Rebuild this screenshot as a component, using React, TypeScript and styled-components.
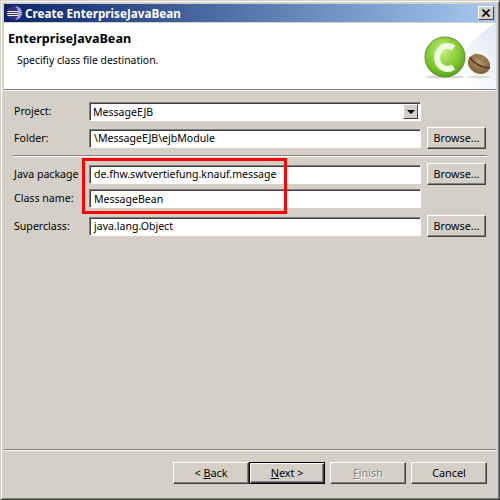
import React from "react";
import styled, { createGlobalStyle } from "styled-components";

const Global = createGlobalStyle`
  html, body { margin: 0; padding: 0; background: #d4d0c8; }
  * { box-sizing: border-box; }
`;

const Win = styled.div`
  position: relative;
  width: 500px;
  height: 500px;
  background: #d4d0c8;
  font-family: "Noto Sans", sans-serif;
  font-size: 10.55px;
  color: #000;
  border-style: solid;
  border-width: 1px;
  border-color: #d4d0c8 #404040 #404040 #d4d0c8;
  box-shadow: inset 1px 1px 0 #fff, inset -1px -1px 0 #808080;
  padding: 3px 3px 3px 3px;
  display: flex;
  flex-direction: column;
`;

const TitleBar = styled.div`
  height: 18px;
  flex: none;
  background: linear-gradient(90deg, #0a246a, #a6caf0);
  color: #fff;
  font-weight: 700;
  font-size: 11.7px;
  display: flex;
  align-items: center;
  padding: 0 2px;
  gap: 3px;
`;

const TitleText = styled.span`
  flex: 1;
  white-space: nowrap;
  padding-bottom: 1px;
`;

const CloseBtn = styled.div`
  width: 16px;
  height: 14px;
  background: #d4d0c8;
  border: 1px solid;
  border-color: #fff #404040 #404040 #fff;
  display: flex;
  align-items: center;
  justify-content: center;
`;

const Header = styled.div`
  margin-top: 1px;
  height: 67px;
  flex: none;
  background: #fff;
  border-bottom: 1px solid #808080;
  box-shadow: 0 1px 0 #fff;
  display: flex;
  justify-content: space-between;
  position: relative;
`;

const HeaderText = styled.div`
  padding: 8px 0 0 4px;
`;

const HeaderTitle = styled.div`
  font-weight: 700;
  font-size: 12.6px;
  line-height: 16px;
`;

const HeaderSub = styled.div`
  margin: 6px 0 0 9px;
  line-height: 14px;
  font-size: 10.4px;
`;

const Form = styled.div`
  padding: 12px 9px 0 9px;
  display: flex;
  flex-direction: column;
  flex: 1;
`;

const Row = styled.div<{ $mb?: number }>`
  display: grid;
  grid-template-columns: 70px 332px 59px;
  column-gap: 6px;
  align-items: center;
  height: 19px;
  margin-bottom: ${(p) => p.$mb ?? 7}px;
`;

const Label = styled.label`
  white-space: nowrap;
  padding: 0 0 1px 1px;
  font-size: 10.6px;
`;

const Field = styled.div`
  height: 19px;
  background: #fff;
  border: 1px solid;
  border-color: #808080 #fff #fff #808080;
  box-shadow: inset 1px 1px 0 #404040;
  padding: 0 0 0 4px;
  display: flex;
  align-items: center;
  line-height: 16px;
  white-space: nowrap;
  overflow: hidden;
  position: relative;
`;

const Combo = styled(Field)`
  padding-left: 3px;
  padding-right: 2px;
  justify-content: space-between;
`;

const ComboBtn = styled.div`
  width: 15px;
  height: 15px;
  background: #d4d0c8;
  border: 1px solid;
  border-color: #fff #404040 #404040 #fff;
  display: flex;
  align-items: center;
  justify-content: center;
`;

const Arrow = styled.div`
  width: 0;
  height: 0;
  border-left: 4px solid transparent;
  border-right: 4px solid transparent;
  border-top: 4px solid #000;
`;

const Btn = styled.div<{ $def?: boolean; $dis?: boolean; $w?: number }>`
  height: 22px;
  width: ${(p) => p.$w ?? 59}px;
  background: #d4d0c8;
  display: flex;
  align-items: center;
  justify-content: center;
  white-space: nowrap;
  padding-bottom: 2px;
  font-size: 10.8px;
  border: 1px solid;
  border-color: ${(p) => (p.$def ? "#000" : "#fff #404040 #404040 #fff")};
  box-shadow: ${(p) => (p.$def ? "inset 1px 1px 0 #fff, inset -1px -1px 0 #404040, inset -2px -2px 0 #808080" : "inset -1px -1px 0 #808080")};
  color: ${(p) => (p.$dis ? "#808080" : "#000")};
  text-shadow: ${(p) => (p.$dis ? "1px 1px 0 #fff" : "none")};
`;

const Rule = styled.div<{ $mt: number; $mb: number }>`
  height: 2px;
  flex: none;
  border-top: 1px solid #808080;
  border-bottom: 1px solid #fff;
  margin: ${(p) => p.$mt}px 0 ${(p) => p.$mb}px;
`;

const Spacer = styled.div`
  flex: 1;
`;

const Footer = styled.div`
  display: flex;
  justify-content: flex-end;
  padding: 11px 9px 12px 0;
  gap: 5px;
`;

const Joined = styled.div`
  display: flex;
`;

const Highlight = styled.div`
  position: absolute;
  left: 81px;
  top: 157px;
  width: 205px;
  height: 56px;
  border: 3px solid #fe0000;
  pointer-events: none;
`;

const Key = styled.span`
  text-decoration: underline;
`;

const Logo = () => (
  <svg width="82" height="66" viewBox="0 0 82 66" style={{ flex: "none" }}>
    <defs>
      <linearGradient id="bg" x1="0" y1="1" x2="1" y2="0">
        <stop offset="0.2" stopColor="#fff" />
        <stop offset="1" stopColor="#dfe6f5" />
      </linearGradient>
      <radialGradient id="g" cx="0.45" cy="0.35" r="0.7">
        <stop offset="0" stopColor="#c8ee80" />
        <stop offset="0.6" stopColor="#7fca2c" />
        <stop offset="1" stopColor="#4f9c18" />
      </radialGradient>
      <radialGradient id="b" cx="0.45" cy="0.4" r="0.7">
        <stop offset="0" stopColor="#b39a72" />
        <stop offset="1" stopColor="#6a4f2c" />
      </radialGradient>
    </defs>
    <path d="M82 0 V66 H34 Q46 20 82 0Z" fill="url(#bg)" />
    <ellipse cx="31" cy="54" rx="20" ry="1.5" fill="#d8d4cc" />
    <ellipse cx="65" cy="54" rx="12" ry="1.2" fill="#dedad2" />
    <circle cx="31" cy="34" r="20" fill="url(#g)" stroke="#5d8f3a" strokeWidth="1" />
    <path d="M39.5 25 A 10.5 11.5 0 1 0 39.5 44" fill="none" stroke="#f0fae0" strokeWidth="6" />
    <g transform="rotate(30 65 41)">
      <ellipse cx="65" cy="41" rx="12" ry="10" fill="url(#b)" stroke="#fff6d8" strokeWidth="1" />
      <path d="M53.5 40 Q65 45 76.5 39" fill="none" stroke="#4d3518" strokeWidth="1.6" />
      <path d="M56 34.5 Q66 38 74 35" fill="none" stroke="#8b7350" strokeWidth="1" />
    </g>
  </svg>
);

export default function App() {
  return (
    <>
      <Global />
      <Win>
        <TitleBar>
          <svg width="16" height="16" viewBox="0 0 16 16">
            <defs>
              <clipPath id="ball"><circle cx="8" cy="8" r="7" /></clipPath>
            </defs>
            <circle cx="8" cy="8" r="7" fill="#3b2f80" />
            <g clipPath="url(#ball)">
              <rect x="0" y="6" width="16" height="1" fill="#f2f2fa" />
              <rect x="0" y="8" width="16" height="1" fill="#f2f2fa" />
              <rect x="0" y="10" width="16" height="1" fill="#f2f2fa" />
            </g>
            <path d="M9 1 A7 7 0 0 1 9 15 A8 8 0 0 0 12 8 A8 8 0 0 0 9 1Z" fill="#a79fd8" />
          </svg>
          <TitleText>Create EnterpriseJavaBean</TitleText>
          <CloseBtn>
            <svg width="8" height="8" viewBox="0 0 8 8">
              <path d="M0.5 0.5 L7.5 7.5 M7.5 0.5 L0.5 7.5" stroke="#000" strokeWidth="1.6" />
            </svg>
          </CloseBtn>
        </TitleBar>
        <Header>
          <HeaderText>
            <HeaderTitle>EnterpriseJavaBean</HeaderTitle>
            <HeaderSub>Specifiy class file destination.</HeaderSub>
          </HeaderText>
          <Logo />
        </Header>
        <Form>
          <Row $mb={6}>
            <Label>Project:</Label>
            <Combo>
              MessageEJB
              <ComboBtn><Arrow /></ComboBtn>
            </Combo>
          </Row>
          <Row $mb={9}>
            <Label>Folder:</Label>
            <Field>\MessageEJB\ejbModule</Field>
            <Btn>Browse...</Btn>
          </Row>
          <Rule $mt={0} $mb={6} />
          <Row>
            <Label>Java package</Label>
            <Field>de.fhw.swtvertiefung.knauf.message</Field>
            <Btn>Browse...</Btn>
          </Row>
          <Row>
            <Label>Class name:</Label>
            <Field>MessageBean</Field>
          </Row>
          <Row>
            <Label>Superclass:</Label>
            <Field>java.lang.Object</Field>
            <Btn>Browse...</Btn>
          </Row>
          <Spacer />
        </Form>
        <Rule $mt={0} $mb={0} />
        <Footer>
          <Joined>
            <Btn $w={76}>&lt;&nbsp;<Key>B</Key>ack</Btn>
            <Btn $w={76} $def><Key>N</Key>ext &gt;</Btn>
          </Joined>
          <Btn $w={76} $dis><Key>F</Key>inish</Btn>
          <Btn $w={76}>Cancel</Btn>
        </Footer>
        <Highlight />
      </Win>
    </>
  );
}
